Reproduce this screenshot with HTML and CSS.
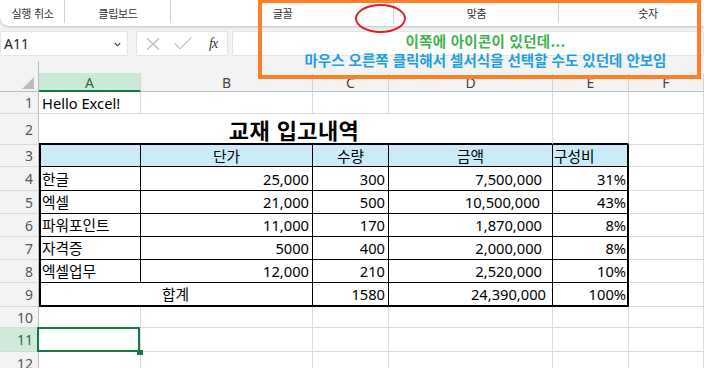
FILE: index.html
```html
<!DOCTYPE html>
<html lang="ko">
<head>
<meta charset="utf-8">
<title>Excel</title>
<link rel="stylesheet" href="styles.css">
</head>
<body>
<div class="app">
  <div class="ribbon">
    <div class="grp w1">실행 취소</div>
    <div class="grp w2">클립보드</div>
    <div class="grp w3">글꼴</div>
    <div class="grp w4">맞춤</div>
    <div class="grp w5">숫자</div>
  </div>

  <div class="fbar">
    <div class="namebox">
      <span>A11</span>
      <svg class="chev" width="7" height="5" viewBox="0 0 7 5"><path d="M0.8 1 L3.5 3.8 L6.2 1" fill="none" stroke="#444" stroke-width="1.1"/></svg>
    </div>
    <div class="fxbox">
      <svg class="ico-x" width="14" height="12" viewBox="0 0 14 12"><path d="M1 0.5 L13 11.5 M13 0.5 L1 11.5" stroke="#b9b9b9" stroke-width="1.1" fill="none"/></svg>
      <svg class="ico-ok" width="18" height="13" viewBox="0 0 18 13"><path d="M0.8 6.5 L6 11.8 L17.2 0.6" stroke="#b9b9b9" stroke-width="1.1" fill="none"/></svg>
      <span class="fx">fx</span>
    </div>
    <div class="finput"></div>
  </div>

  <div class="sheet">
    <!-- header row -->
    <div class="corner"><div class="tri"></div></div>
    <div class="ch sel">A</div>
    <div class="ch">B</div>
    <div class="ch">C</div>
    <div class="ch">D</div>
    <div class="ch">E</div>
    <div class="ch">F</div>

    <!-- row 1 -->
    <div class="rh">1</div>
    <div class="c">Hello Excel!</div>
    <div class="c"></div><div class="c"></div><div class="c"></div><div class="c"></div><div class="c"></div>

    <!-- row 2 -->
    <div class="rh">2</div>
    <div class="c span4 ctr title topb">교재 입고내역</div>
    <div class="c topb"></div>
    <div class="c"></div>

    <!-- row 3 -->
    <div class="rh">3</div>
    <div class="c t tl hd"></div>
    <div class="c t hd ctr">단가</div>
    <div class="c t hd ctr">수량</div>
    <div class="c t hd ctr">금액</div>
    <div class="c t te hd el">구성비</div>
    <div class="c"></div>

    <!-- row 4 -->
    <div class="rh">4</div>
    <div class="c t tl">한글</div>
    <div class="c t r">25,000</div>
    <div class="c t r">300</div>
    <div class="c t r dr">7,500,000</div>
    <div class="c t te r er">31%</div>
    <div class="c"></div>

    <!-- row 5 -->
    <div class="rh">5</div>
    <div class="c t tl">엑셀</div>
    <div class="c t r">21,000</div>
    <div class="c t r">500</div>
    <div class="c t r dr2">10,500,000</div>
    <div class="c t te r er">43%</div>
    <div class="c"></div>

    <!-- row 6 -->
    <div class="rh">6</div>
    <div class="c t tl">파워포인트</div>
    <div class="c t r">11,000</div>
    <div class="c t r">170</div>
    <div class="c t r dr">1,870,000</div>
    <div class="c t te r er">8%</div>
    <div class="c"></div>

    <!-- row 7 -->
    <div class="rh">7</div>
    <div class="c t tl">자격증</div>
    <div class="c t r">5000</div>
    <div class="c t r">400</div>
    <div class="c t r dr">2,000,000</div>
    <div class="c t te r er">8%</div>
    <div class="c"></div>

    <!-- row 8 -->
    <div class="rh">8</div>
    <div class="c t tl">엑셀업무</div>
    <div class="c t r">12,000</div>
    <div class="c t r">210</div>
    <div class="c t r dr">2,520,000</div>
    <div class="c t te r er">10%</div>
    <div class="c"></div>

    <!-- row 9 -->
    <div class="rh">9</div>
    <div class="c t tl tb span2 ctr">합계</div>
    <div class="c t tb r">1580</div>
    <div class="c t tb r dr3">24,390,000</div>
    <div class="c t te tb r er">100%</div>
    <div class="c"></div>

    <!-- row 10 -->
    <div class="rh">10</div>
    <div class="c"></div><div class="c"></div><div class="c"></div><div class="c"></div><div class="c"></div><div class="c"></div>

    <!-- row 11 -->
    <div class="rh rsel">11</div>
    <div class="c active"><span class="handle"></span></div>
    <div class="c"></div><div class="c"></div><div class="c"></div><div class="c"></div><div class="c"></div>

    <!-- row 12 -->
    <div class="rh">12</div>
    <div class="c"></div><div class="c"></div><div class="c"></div><div class="c"></div><div class="c"></div><div class="c"></div>
  </div>

  <div class="note">
    <p class="green">이쪽에 아이콘이 있던데...</p>
    <p class="blue">마우스 오른쪽 클릭해서 셀서식을 선택할 수도 있던데 안보임</p>
  </div>
  <div class="circle"></div>
</div>
</body>
</html>
```

FILE: styles.css
```css
* { box-sizing: border-box; }

html, body {
  margin: 0;
  padding: 0;
}

body {
  width: 704px;
  height: 368px;
  overflow: hidden;
  background: #f3f3f3;
  font-family: "Noto Sans", "Noto Sans CJK KR", sans-serif;
  color: #000;
}

.app {
  position: relative;
  width: 704px;
  height: 368px;
  overflow: hidden;
}

/* ribbon */
.ribbon {
  display: flex;
  height: 26px;
  background: #fff;
  border-bottom-left-radius: 9px;
  box-shadow: 0 1px 3px rgba(0, 0, 0, 0.22);
  font-family: "Noto Sans CJK KR", sans-serif;
  font-size: 11px;
  letter-spacing: -0.3px;
  color: #333;
}

.grp {
  flex-shrink: 0;
  height: 26px;
  display: flex;
  align-items: center;
  justify-content: center;
  padding-bottom: 1px;
  background: linear-gradient(#d2d2d2, #d2d2d2) right top / 1px 23px no-repeat;
}

.w1 { width: 65px; }
.w2 { width: 106px; }
.w3 { width: 223px; }
.w4 { width: 165px; }
.w5 { width: 178px; background: none; }

/* formula bar */
.fbar {
  display: flex;
  height: 25px;
  margin-top: 5px;
}

.namebox {
  width: 128px;
  background: #fff;
  border: 1px solid #e4e4e4;
  border-radius: 2px;
  display: flex;
  align-items: center;
  justify-content: space-between;
  padding: 0 6px 0 3px;
  font-size: 14px;
  color: #222;
}

.chev { margin-top: 1px; }

.fxbox {
  width: 92px;
  margin-left: 8px;
  background: #fff;
  border: 1px solid #e4e4e4;
  border-radius: 2px;
  display: flex;
  align-items: center;
  padding-left: 9px;
}

.ico-x { margin-top: 1px; }
.ico-ok { margin-left: 14px; }

.fx {
  margin-left: 17px;
  font-family: "Liberation Serif", serif;
  font-style: italic;
  font-size: 14px;
  color: #333;
  letter-spacing: -1px;
}

.finput {
  flex: 1;
  margin-left: 4px;
  background: #fff;
  border: 1px solid #e4e4e4;
  border-radius: 2px;
}

/* sheet */
.sheet {
  margin-top: 5px;
  display: grid;
  grid-template-columns: 39px 102px 172px 76px 164px 76px 1fr;
  grid-template-rows: 31px 22px 31px 22px 24px 23px 23px 23px 23px 24px 21px 24px 24px;
  font-size: 14.7px;
}

.corner {
  border-right: 1px solid #bdbdbd;
  border-bottom: 1px solid #bdbdbd;
  display: flex;
  align-items: flex-end;
  justify-content: flex-end;
  padding: 0 4px 2px 0;
}

.tri {
  width: 12px;
  height: 12px;
  background: #bcbcbc;
  clip-path: polygon(100% 0, 100% 100%, 0 100%);
}

.ch {
  margin-top: 12px;
  background: #f3f3f3;
  border-right: 1px solid #d6d6d6;
  border-bottom: 1px solid #bdbdbd;
  display: flex;
  align-items: center;
  justify-content: center;
  font-size: 14px;
  color: #444;
}

.ch.sel {
  background: #cae9d6;
  color: #1d6b40;
  border-bottom: 2px solid #137a43;
  padding-top: 1px;
}

.rh {
  background: #f3f3f3;
  border-right: 1px solid #bdbdbd;
  border-bottom: 1px solid #d9d9d9;
  display: flex;
  align-items: center;
  justify-content: flex-end;
  padding-right: 5px;
  font-size: 14px;
  color: #555;
}

.rh.rsel {
  background: #cfeada;
  color: #2a6b47;
}

.c {
  background: #fff;
  border-right: 1px solid #dadada;
  border-bottom: 1px solid #dadada;
  display: flex;
  align-items: center;
  padding: 0 3px;
  white-space: nowrap;
  line-height: 18px;
}

.span4 { grid-column: span 4; }
.span2 { grid-column: span 2; }

.title {
  font-family: "Noto Sans CJK KR", sans-serif;
  font-weight: 700;
  font-size: 22px;
  line-height: 26px;
  padding-left: 0;
  letter-spacing: 0.4px;
}

.topb { border-bottom: 2px solid #000; }

.t {
  border-right-color: #000;
  border-bottom-color: #000;
}

.tl {
  border-left: 2px solid #000;
  padding-left: 1px;
}

.te { border-right: 2px solid #000; }
.tb { border-bottom: 2px solid #000; }

.hd { background: #ccebf9; }

.r { justify-content: flex-end; }
.ctr { justify-content: center; }

.el { padding-left: 1px; }
.er { padding-right: 1px; }
.dr { padding-right: 10px; }
.dr2 { padding-right: 12px; }
.dr3 { padding-right: 6px; }

.active { position: relative; }

.active::after {
  content: "";
  position: absolute;
  left: -2px;
  top: -1px;
  right: 0;
  bottom: -1px;
  border: 2px solid #137a43;
}

.handle {
  position: absolute;
  left: 98px;
  top: 22px;
  width: 6px;
  height: 5px;
  background: #137a43;
  z-index: 1;
}

/* annotation overlay */
.note {
  position: absolute;
  left: 258px;
  top: -1px;
  width: 443px;
  height: 80px;
  border: 4px solid #ff7f27;
  display: flex;
  flex-direction: column;
  align-items: center;
  gap: 1px;
  padding: 29px 0 0 12px;
  font-family: "Noto Sans CJK KR", sans-serif;
  font-weight: 700;
  font-size: 14.5px;
  line-height: 18px;
}

.note p {
  margin: 0;
  white-space: nowrap;
}

.green { color: #3bb54a; letter-spacing: 0.3px; }
.blue { color: #1d9fe0; }

.circle {
  position: absolute;
  left: 355px;
  top: 4px;
  width: 51px;
  height: 29px;
  border: 2.5px solid #e22121;
  border-radius: 50%;
}
```
